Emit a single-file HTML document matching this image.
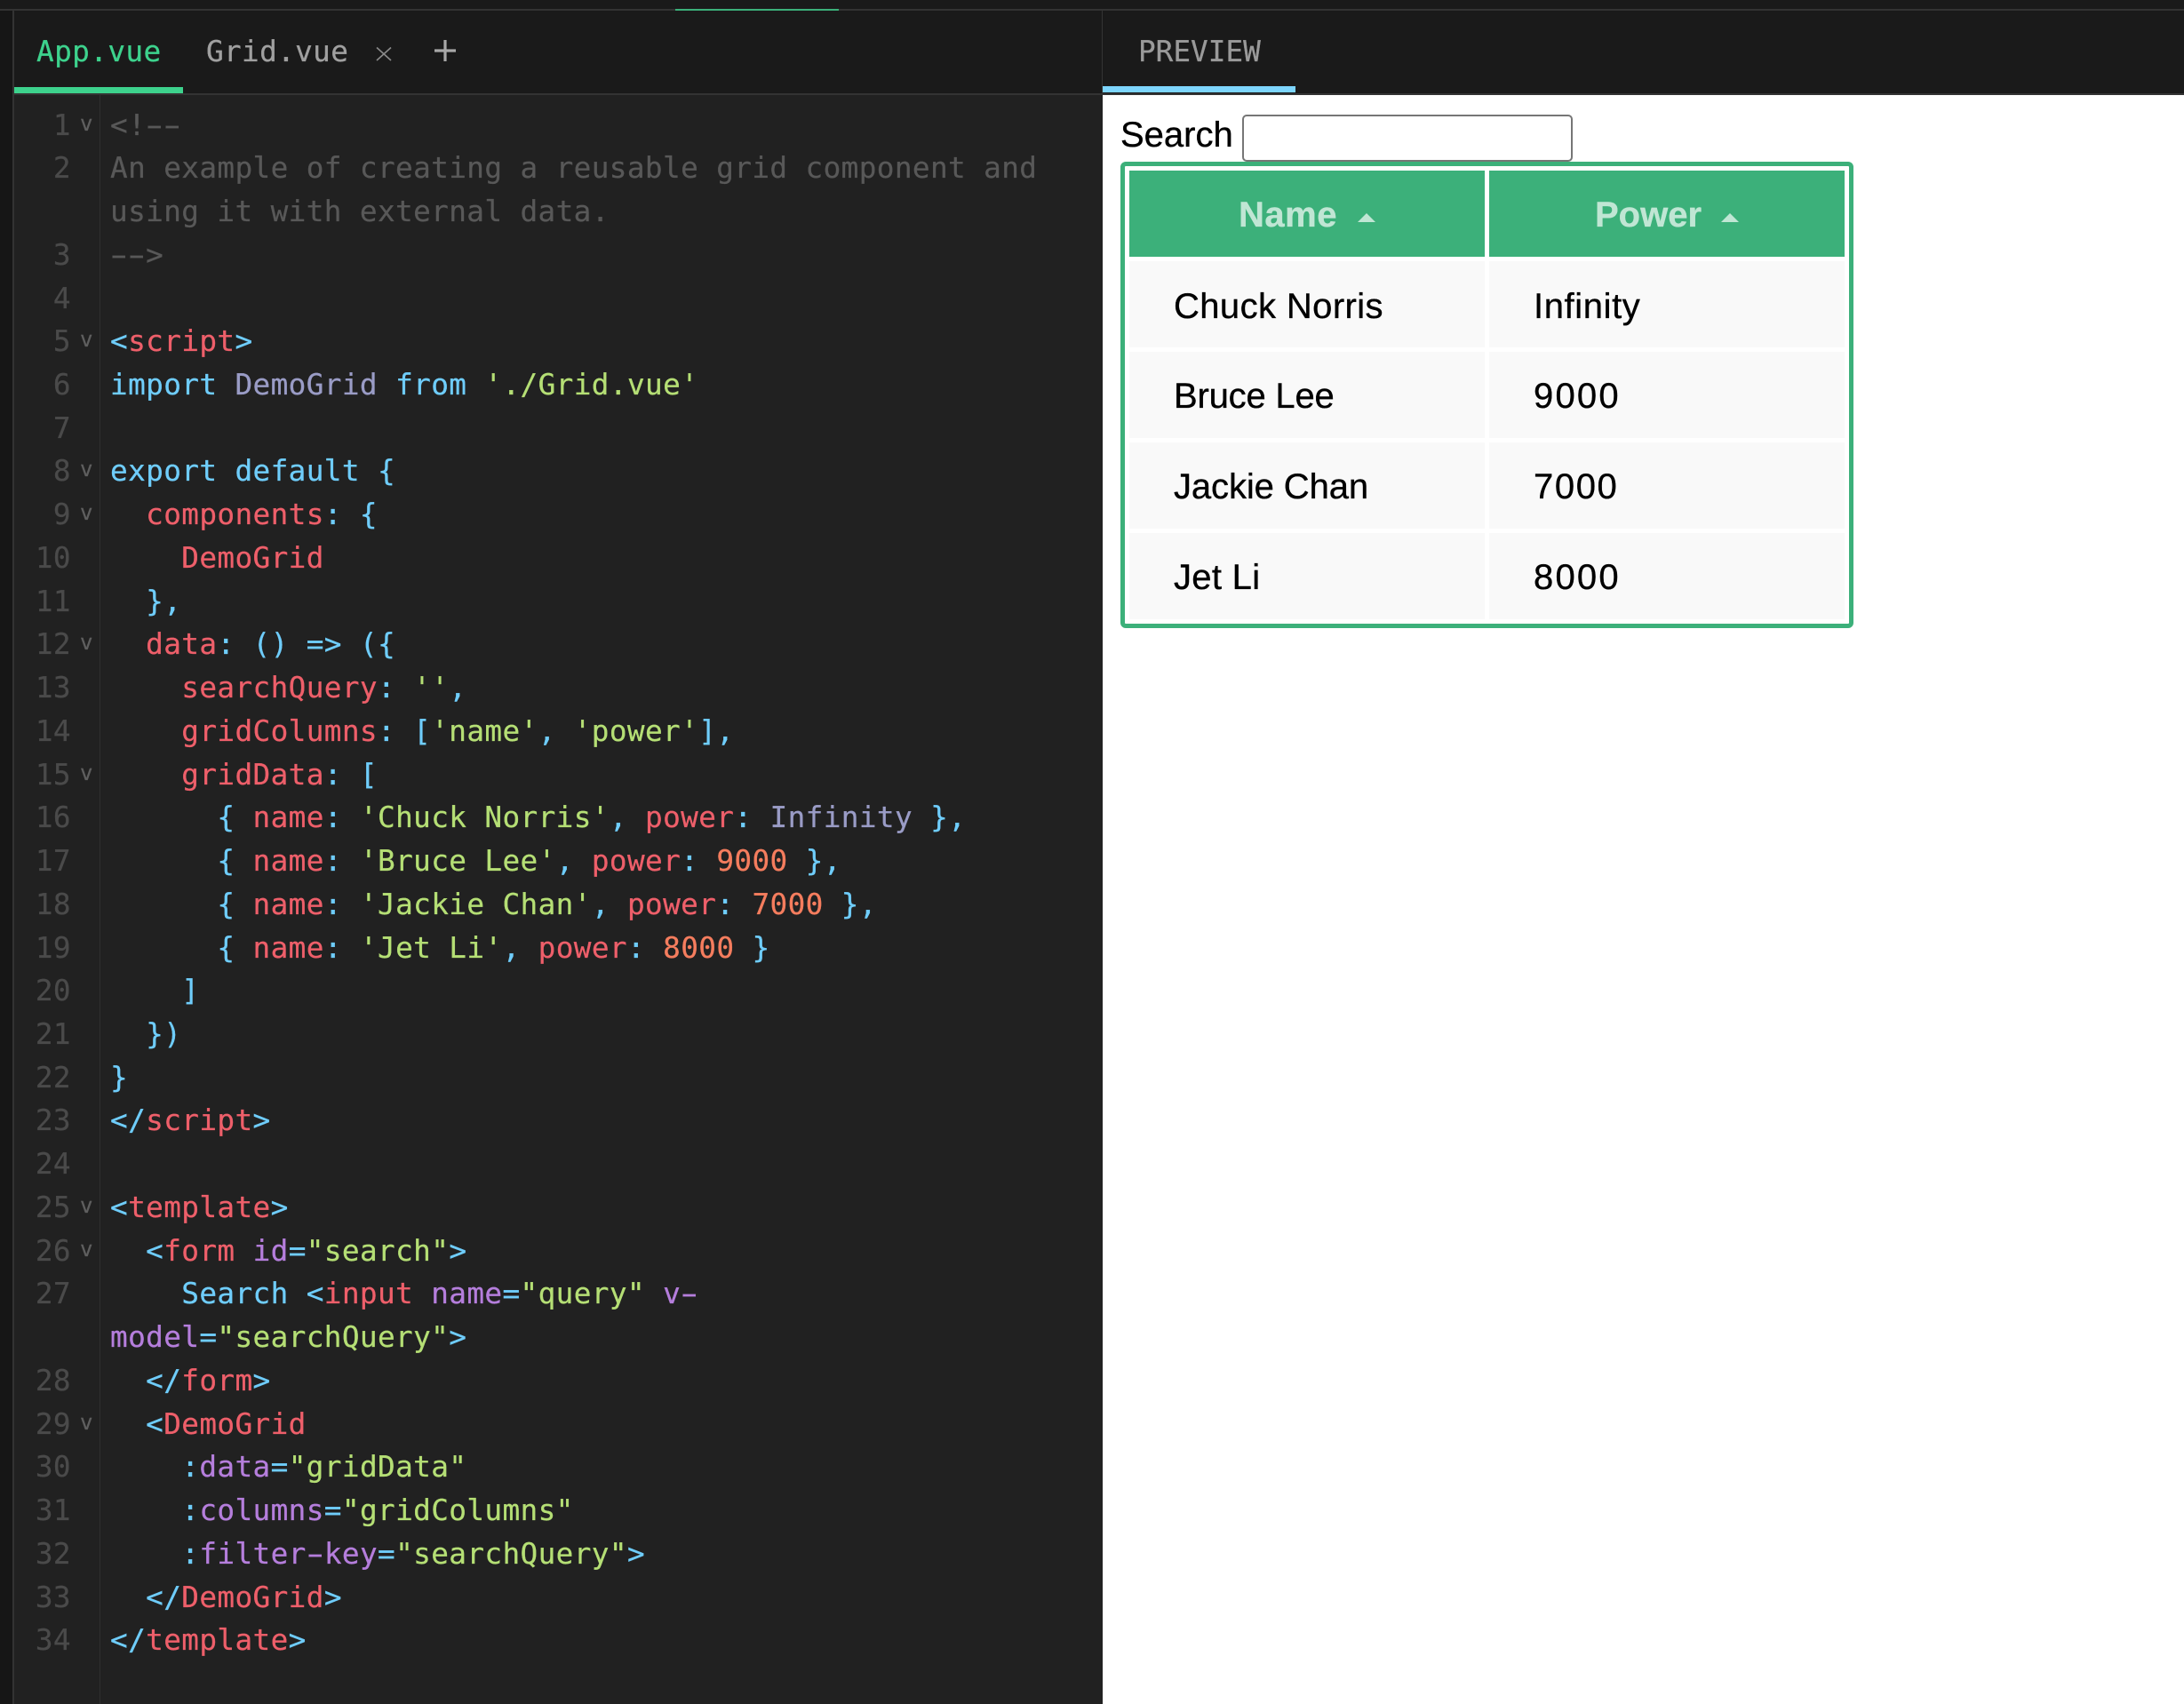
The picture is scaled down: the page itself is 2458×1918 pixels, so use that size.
<!DOCTYPE html>
<html lang="en"><head><meta charset="utf-8"><title>Vue Grid Example</title>
<style>
html,body{margin:0;padding:0;width:2458px;height:1918px;overflow:hidden;background:#1a1a1a;text-rendering:geometricPrecision}
.a{position:absolute}
.m{font-family:"DejaVu Sans Mono","Liberation Mono",monospace;font-size:32.7px;-webkit-text-stroke:.25px}
.code{position:absolute;left:0;top:116.6px;width:1240px}
.r{position:relative;height:48.74px;line-height:48.74px;white-space:pre;font-family:"DejaVu Sans Mono","Liberation Mono",monospace;font-size:32.7px;letter-spacing:.385px;-webkit-text-stroke:.25px}
.n{position:absolute;right:1160px;top:0;color:#4a4a4a}
.f{position:absolute;left:90px;top:-2px;font-size:24px;color:#5f5f5f;letter-spacing:0}
.t{position:absolute;left:124px;top:0}
.g{color:#585858}.k{color:#6fcdfb}.p{color:#ee5f6a}.s{color:#b5df75}.v{color:#9a9cc6}.o{color:#f57d5e}.u{color:#b57edc}
.d{display:inline-block;transform:scaleX(1.7)}
.s2{font-family:"Liberation Sans",sans-serif;font-size:40px;line-height:46px;color:#000;white-space:pre;-webkit-text-stroke:.35px}
.cell{position:absolute;background:#f9f9f9}
.th{position:absolute;background:#3cb07a}
.h{font-weight:bold;color:#c0e6d4}
</style></head>
<body>
<div class="a" style="left:0;top:0;width:2458px;height:1918px;background:#1a1a1a">
<div class="a" style="left:0;top:10px;width:2458px;height:2px;background:#333"></div>
<div class="a" style="left:760px;top:10px;width:184px;height:2px;background:#3cb07a"></div>
<div class="a" style="left:0;top:12px;width:14px;height:1906px;background:#161616"></div>
<div class="a" style="left:14px;top:12px;width:2px;height:1906px;background:#333"></div>
<div class="a" style="left:16px;top:107px;width:1225px;height:1811px;background:#212121"></div>
<div class="a" style="left:112px;top:107px;width:1px;height:1811px;background:#2f2f2f"></div>
<div class="a" style="left:16px;top:105px;width:2442px;height:2px;background:#333"></div>
<div class="a" style="left:1240px;top:12px;width:1px;height:93px;background:#333"></div>
<div class="a" style="left:1241px;top:107px;width:1217px;height:1811px;background:#fff"></div>

<!-- tabs -->
<div class="a" style="left:16px;top:98px;width:190px;height:7px;background:#3dd28d"></div>
<div class="a m" style="left:41px;top:34px;line-height:48px;color:#3dd28d;letter-spacing:.4px">App.vue</div>
<div class="a m" style="left:232px;top:34px;line-height:48px;color:#a0a0a0;letter-spacing:.35px">Grid.vue</div>
<svg class="a" style="left:421px;top:51px" width="22" height="19" viewBox="0 0 22 19"><path d="M3 2.5 L19 17 M19 2.5 L3 17" stroke="#8a8a8a" stroke-width="1.6" fill="none"/></svg>
<svg class="a" style="left:488px;top:44px" width="26" height="26" viewBox="0 0 26 26"><path d="M13 1 V25 M1 13 H25" stroke="#a8a8a8" stroke-width="3.2" fill="none"/></svg>
<div class="a m" style="left:1281px;top:34px;line-height:48px;color:#9a9a9a">PREVIEW</div>
<div class="a" style="left:1241px;top:97px;width:217px;height:7px;background:#7dd5fd"></div>

<!-- code -->
<div class="code">
<div class="r"><span class="n">1</span><span class="f">v</span><span class="t g">&lt;!<span class="d">-</span><span class="d">-</span></span></div>
<div class="r"><span class="n">2</span><span class="t g">An example of creating a reusable grid component and</span></div>
<div class="r"><span class="t g">using it with external data.</span></div>
<div class="r"><span class="n">3</span><span class="t g"><span class="d">-</span><span class="d">-</span>&gt;</span></div>
<div class="r"><span class="n">4</span></div>
<div class="r"><span class="n">5</span><span class="f">v</span><span class="t"><span class="k">&lt;</span><span class="p">script</span><span class="k">&gt;</span></span></div>
<div class="r"><span class="n">6</span><span class="t"><span class="k">import</span> <span class="v">DemoGrid</span> <span class="k">from</span> <span class="s">'./Grid.vue'</span></span></div>
<div class="r"><span class="n">7</span></div>
<div class="r"><span class="n">8</span><span class="f">v</span><span class="t k">export default {</span></div>
<div class="r"><span class="n">9</span><span class="f">v</span><span class="t">  <span class="p">components</span><span class="k">: {</span></span></div>
<div class="r"><span class="n">10</span><span class="t">    <span class="p">DemoGrid</span></span></div>
<div class="r"><span class="n">11</span><span class="t k">  },</span></div>
<div class="r"><span class="n">12</span><span class="f">v</span><span class="t">  <span class="p">data</span><span class="k">: () =&gt; ({</span></span></div>
<div class="r"><span class="n">13</span><span class="t">    <span class="p">searchQuery</span><span class="k">:</span> <span class="s">''</span><span class="k">,</span></span></div>
<div class="r"><span class="n">14</span><span class="t">    <span class="p">gridColumns</span><span class="k">: [</span><span class="s">'name'</span><span class="k">,</span> <span class="s">'power'</span><span class="k">],</span></span></div>
<div class="r"><span class="n">15</span><span class="f">v</span><span class="t">    <span class="p">gridData</span><span class="k">: [</span></span></div>
<div class="r"><span class="n">16</span><span class="t">      <span class="k">{</span> <span class="p">name</span><span class="k">:</span> <span class="s">'Chuck Norris'</span><span class="k">,</span> <span class="p">power</span><span class="k">:</span> <span class="v">Infinity</span> <span class="k">},</span></span></div>
<div class="r"><span class="n">17</span><span class="t">      <span class="k">{</span> <span class="p">name</span><span class="k">:</span> <span class="s">'Bruce Lee'</span><span class="k">,</span> <span class="p">power</span><span class="k">:</span> <span class="o">9000</span> <span class="k">},</span></span></div>
<div class="r"><span class="n">18</span><span class="t">      <span class="k">{</span> <span class="p">name</span><span class="k">:</span> <span class="s">'Jackie Chan'</span><span class="k">,</span> <span class="p">power</span><span class="k">:</span> <span class="o">7000</span> <span class="k">},</span></span></div>
<div class="r"><span class="n">19</span><span class="t">      <span class="k">{</span> <span class="p">name</span><span class="k">:</span> <span class="s">'Jet Li'</span><span class="k">,</span> <span class="p">power</span><span class="k">:</span> <span class="o">8000</span> <span class="k">}</span></span></div>
<div class="r"><span class="n">20</span><span class="t k">    ]</span></div>
<div class="r"><span class="n">21</span><span class="t k">  })</span></div>
<div class="r"><span class="n">22</span><span class="t k">}</span></div>
<div class="r"><span class="n">23</span><span class="t"><span class="k">&lt;/</span><span class="p">script</span><span class="k">&gt;</span></span></div>
<div class="r"><span class="n">24</span></div>
<div class="r"><span class="n">25</span><span class="f">v</span><span class="t"><span class="k">&lt;</span><span class="p">template</span><span class="k">&gt;</span></span></div>
<div class="r"><span class="n">26</span><span class="f">v</span><span class="t">  <span class="k">&lt;</span><span class="p">form</span> <span class="u">id</span><span class="k">=</span><span class="s">"search"</span><span class="k">&gt;</span></span></div>
<div class="r"><span class="n">27</span><span class="t">    <span class="k">Search &lt;</span><span class="p">input</span> <span class="u">name</span><span class="k">=</span><span class="s">"query"</span> <span class="u">v<span class="d">-</span></span></span></div>
<div class="r"><span class="t"><span class="u">model</span><span class="k">=</span><span class="s">"searchQuery"</span><span class="k">&gt;</span></span></div>
<div class="r"><span class="n">28</span><span class="t">  <span class="k">&lt;/</span><span class="p">form</span><span class="k">&gt;</span></span></div>
<div class="r"><span class="n">29</span><span class="f">v</span><span class="t">  <span class="k">&lt;</span><span class="p">DemoGrid</span></span></div>
<div class="r"><span class="n">30</span><span class="t">    <span class="k">:</span><span class="u">data</span><span class="k">=</span><span class="s">"gridData"</span></span></div>
<div class="r"><span class="n">31</span><span class="t">    <span class="k">:</span><span class="u">columns</span><span class="k">=</span><span class="s">"gridColumns"</span></span></div>
<div class="r"><span class="n">32</span><span class="t">    <span class="k">:</span><span class="u">filter<span class="d">-</span>key</span><span class="k">=</span><span class="s">"searchQuery"</span><span class="k">&gt;</span></span></div>
<div class="r"><span class="n">33</span><span class="t">  <span class="k">&lt;/</span><span class="p">DemoGrid</span><span class="k">&gt;</span></span></div>
<div class="r"><span class="n">34</span><span class="t"><span class="k">&lt;/</span><span class="p">template</span><span class="k">&gt;</span></span></div>
</div>

<!-- preview -->
<div class="a s2" style="left:1261px;top:129px">Search</div>
<div class="a" style="left:1398px;top:129px;width:372px;height:53px;box-sizing:border-box;border:2px solid #767676;border-radius:5px;background:#fff"></div>
<div class="a" style="left:1261px;top:182px;width:825px;height:525px;box-sizing:border-box;border:5px solid #3cb07a;border-radius:6px;background:#fff"></div>

<div class="th" style="left:1271px;top:192px;width:400px;height:97px"></div>
<div class="th" style="left:1676px;top:192px;width:400px;height:97px"></div>
<div class="a s2 h" style="left:1394px;top:219px;letter-spacing:.5px">Name</div>
<svg class="a" style="left:1528px;top:240px" width="20" height="10" viewBox="0 0 20 10"><path d="M10 0 L20 10 H0 Z" fill="#c0e6d4"/></svg>
<div class="a s2 h" style="left:1795px;top:219px">Power</div>
<svg class="a" style="left:1937px;top:240px" width="20" height="10" viewBox="0 0 20 10"><path d="M10 0 L20 10 H0 Z" fill="#c0e6d4"/></svg>

<div class="cell" style="left:1271px;top:294px;width:400px;height:97px"></div>
<div class="cell" style="left:1676px;top:294px;width:400px;height:97px"></div>
<div class="cell" style="left:1271px;top:396px;width:400px;height:97px"></div>
<div class="cell" style="left:1676px;top:396px;width:400px;height:97px"></div>
<div class="cell" style="left:1271px;top:498px;width:400px;height:97px"></div>
<div class="cell" style="left:1676px;top:498px;width:400px;height:97px"></div>
<div class="cell" style="left:1271px;top:600px;width:400px;height:97px"></div>
<div class="cell" style="left:1676px;top:600px;width:400px;height:97px"></div>

<div class="a s2" style="left:1321px;top:322px;letter-spacing:.4px">Chuck Norris</div>
<div class="a s2" style="left:1726px;top:322px;letter-spacing:.6px">Infinity</div>
<div class="a s2" style="left:1321px;top:423px;letter-spacing:-.2px">Bruce Lee</div>
<div class="a s2" style="left:1726px;top:423px;letter-spacing:2.2px">9000</div>
<div class="a s2" style="left:1321px;top:525px;letter-spacing:-.1px">Jackie Chan</div>
<div class="a s2" style="left:1726px;top:525px;letter-spacing:1.6px">7000</div>
<div class="a s2" style="left:1321px;top:627px;letter-spacing:.3px">Jet Li</div>
<div class="a s2" style="left:1726px;top:627px;letter-spacing:2.2px">8000</div>
</div>
</body></html>
